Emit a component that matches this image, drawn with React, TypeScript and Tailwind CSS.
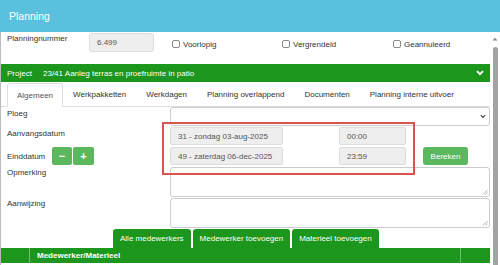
import React from 'react';

const GREEN = 'bg-[#1c961c]';

function Check({ label, width }: { label: string; width: string }) {
  return (
    <div className={`flex items-center ${width}`}>
      <span className="w-[8px] h-[8px] border border-[#8a8a8a] rounded-[2px] bg-white" />
      <span className="ml-[3px]">{label}</span>
    </div>
  );
}

function Grip() {
  return (
    <svg className="absolute right-[1px] bottom-[1px]" width="6" height="6" viewBox="0 0 6 6">
      <path d="M5.5 1 L1 5.5 M5.5 3.5 L3.5 5.5" stroke="#999" strokeWidth="0.8" />
    </svg>
  );
}

function Field({ value, width }: { value: string; width: string }) {
  return (
    <div className={`${width} h-[18px] bg-[#eee] border border-[#ddd] rounded-[2px] flex items-center pl-[7px] text-[#555]`}>
      {value}
    </div>
  );
}

const tabs = ['Werkpakketten', 'Werkdagen', 'Planning overlappend', 'Documenten', 'Planning interne uitvoer'];

export default function App() {
  return (
    <div className="w-[500px] h-[265px] overflow-hidden bg-white flex flex-col font-['Liberation_Sans',Arial,sans-serif] text-[8px] leading-[9px] text-[#333]">
      {/* Header */}
      <div className="h-[32px] shrink-0 bg-[#5bc0de] flex items-center pl-[9px] text-white text-[10.5px]">
        Planning
      </div>

      <div className="flex flex-1 min-h-0">
        <div className="relative w-[490px] flex flex-col border-l border-[#bbb]">
          {/* Planningnummer row */}
          <div className="h-[32px] shrink-0 flex items-start">
            <div className="w-[88px] pl-[6px] pt-[2px]">Planningnummer</div>
            <div className="w-[65px] h-[19px] mt-[1px] bg-[#eee] border border-[#ddd] rounded-[3px] flex items-center pl-[7px] text-[#555]">
              6.499
            </div>
            <div className="flex items-center h-[24px] ml-[18px]">
              <Check label="Voorlopig" width="w-[110px]" />
              <Check label="Vergrendeld" width="w-[111px]" />
              <Check label="Geannuleerd" width="w-[80px]" />
            </div>
          </div>

          {/* Project bar */}
          <div className={`h-[18px] shrink-0 ${GREEN} text-white flex items-center pl-[6px] pr-[6px]`}>
            <span className="w-[36px]">Project</span>
            <span className="flex-1">23/41 Aanleg terras en proefruimte in patio</span>
            <svg width="8" height="6" viewBox="0 0 8 6">
              <path d="M1 1.2 L4 4.2 L7 1.2" stroke="white" strokeWidth="1.8" fill="none" />
            </svg>
          </div>

          {/* Tabs */}
          <div className="h-[25px] shrink-0 flex items-end pl-[6px] border-b border-[#ddd]">
            <div className="h-[24px] -mb-px px-[9px] flex items-center border border-[#ddd] border-b-white rounded-t-[3px] bg-white text-[#555]">
              Algemeen
            </div>
            {tabs.map((t) => (
              <div key={t} className="h-[24px] px-[10px] flex items-center">
                {t}
              </div>
            ))}
          </div>

          {/* Ploeg */}
          <div className="flex h-[19px] shrink-0">
            <div className="w-[169px] pl-[6px] pt-[2px]">Ploeg</div>
            <div className="flex-1 border border-[#ccc] rounded-[3px] flex items-center justify-end pr-[3px]">
              <svg width="6" height="5" viewBox="0 0 6 5">
                <path d="M0.8 1 L3 3.4 L5.2 1" stroke="#333" strokeWidth="1.1" fill="none" />
              </svg>
            </div>
          </div>

          {/* Aanvangsdatum */}
          <div className="flex h-[18px] shrink-0 mt-[1px]">
            <div className="w-[169px] pl-[6px] pt-[2px]">Aanvangsdatum</div>
            <Field value="31 - zondag 03-aug-2025" width="w-[113px]" />
            <div className="w-[56px]" />
            <Field value="00:00" width="w-[67px]" />
          </div>

          {/* Einddatum */}
          <div className="flex h-[18px] shrink-0 mt-[2px]">
            <div className="w-[169px] pl-[6px] flex items-center">
              <span className="w-[45px]">Einddatum</span>
              <div className="flex gap-[1px]">
                <button className="w-[20px] h-[18px] bg-[#5cb85c] rounded-[2px] text-white text-[11px] font-bold leading-none flex items-center justify-center">
                  −
                </button>
                <button className="w-[21px] h-[18px] bg-[#5cb85c] rounded-[2px] text-white text-[11px] font-bold leading-none flex items-center justify-center">
                  +
                </button>
              </div>
            </div>
            <Field value="49 - zaterdag 06-dec-2025" width="w-[113px]" />
            <div className="w-[56px]" />
            <Field value="23:59" width="w-[67px]" />
            <button className="ml-[17px] w-[45px] h-[18px] bg-[#5cb85c] rounded-[3px] text-white flex items-center justify-center">
              Bereken
            </button>
          </div>

          {/* Opmerking */}
          <div className="flex h-[30px] shrink-0 mt-[2px]">
            <div className="w-[169px] pl-[6px] pt-[1px]">Opmerking</div>
            <div className="relative flex-1 border border-[#ccc] rounded-[3px]">
              <Grip />
            </div>
          </div>

          {/* Aanwijzing */}
          <div className="flex h-[30px] shrink-0 mt-[1px]">
            <div className="w-[169px] pl-[6px] pt-[1px]">Aanwijzing</div>
            <div className="relative flex-1 border border-[#ccc] rounded-[3px]">
              <Grip />
            </div>
          </div>

          {/* Buttons */}
          <div className="flex h-[19px] shrink-0 mt-[1px] pl-[112px] gap-[2px]">
            {['Alle medewerkers', 'Medewerker toevoegen', 'Materieel toevoegen'].map((b) => (
              <button key={b} className={`h-[19px] px-[7px] ${GREEN} text-white rounded-t-[3px] flex items-center`}>
                {b}
              </button>
            ))}
          </div>

          {/* Table header */}
          <div className={`flex h-[15px] shrink-0 ${GREEN} text-white font-bold`}>
            <div className="w-[29px] border-r border-[#6fbf6f]" />
            <div className="flex-1 pl-[7px] flex items-center border-r border-[#6fbf6f]">Medewerker/Materieel</div>
            <div className="w-[29px]" />
          </div>

          {/* Red annotation box */}
          <div className="absolute left-[161px] top-[90px] w-[253px] h-[53px] border-2 border-[#d9534f] pointer-events-none" />
        </div>

        {/* Scrollbar */}
        <div className="w-[10px] flex flex-col items-center bg-white">
          <svg className="mt-[5px]" width="6" height="4" viewBox="0 0 6 4">
            <path d="M0.5 3.5 L3 0.8 L5.5 3.5 Z" fill="#888" />
          </svg>
          <div className="mt-[6px] w-[5px] flex-1 bg-[#a3a3a3] rounded-t-full" />
        </div>
      </div>
    </div>
  );
}
